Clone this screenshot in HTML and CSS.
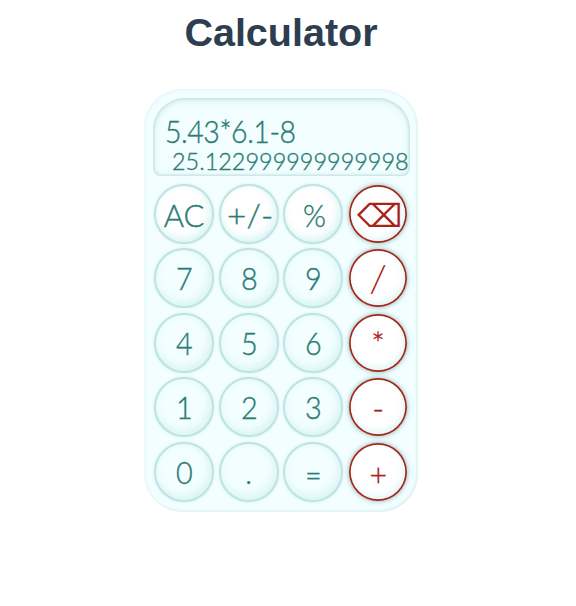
FILE: index.html
```html
<!DOCTYPE html>
<html lang="en">
<head>
<meta charset="utf-8">
<title>Calculator</title>
<link rel="stylesheet" href="styles.css">
</head>
<body>
<h1>Calculator</h1>
<main class="calculator">
  <section class="display">
    <div class="expression">5.43*6.1-8</div>
    <div class="result">25.122999999999998</div>
  </section>
  <section class="keys">
    <button class="key fn"><span class="ac">AC</span></button><button class="key fn"><span class="sign">+/-</span></button><button class="key fn"><span class="percent">%</span></button><button class="key op"><span class="erase">⌫</span></button>
    <button class="key"><span>7</span></button><button class="key"><span>8</span></button><button class="key"><span>9</span></button><button class="key op"><span class="slash">/</span></button>
    <button class="key"><span>4</span></button><button class="key"><span>5</span></button><button class="key"><span>6</span></button><button class="key op"><span class="times">*</span></button>
    <button class="key"><span>1</span></button><button class="key"><span>2</span></button><button class="key"><span>3</span></button><button class="key op"><span class="minus">-</span></button>
    <button class="key"><span>0</span></button><button class="key"><span>.</span></button><button class="key"><span class="equals">=</span></button><button class="key op"><span class="plus">+</span></button>
  </section>
</main>
</body>
</html>
```
FILE: styles.css
```css
* { box-sizing: border-box; }
body {
  margin: 0;
  width: 562px;
  background: #fff;
  font-family: Lato, "Noto Sans", sans-serif;
  font-weight: 300;
}
h1 {
  margin: 9px 0 33px;
  font: bold 39.5px/47px "Liberation Sans", sans-serif;
  text-align: center;
  color: #2c3e50;
}
.calculator {
  width: 274px;
  height: 423px;
  margin: 0 auto;
  padding: 9px 8px 0 9px;
  border-radius: 38px;
  background: #f2feff;
  box-shadow: inset 1px 1px 3px #e6f6f6, inset -1px -1px 3px #d6ecec;
}
.display {
  width: 257px;
  height: 78px;
  padding: 14px 0 0 12px;
  border-radius: 32px 32px 8px 8px;
  background: #f2feff;
  box-shadow: inset 0 0 3px 1px #c0dfde, inset 0 2px 8px #d3eeed;
  color: #2c7c75;
  white-space: nowrap;
  -webkit-text-stroke: 0.4px;
}
.expression {
  width: max-content;
  font-size: 32px;
  line-height: 38px;
  letter-spacing: -0.5px;
  transform: scaleX(.89);
  transform-origin: left;
}
.result {
  width: max-content;
  margin: -4px 0 0 7px;
  font-size: 24px;
  line-height: 29px;
  transform: scaleX(.977);
  transform-origin: left;
}
.keys {
  display: grid;
  grid-template-columns: repeat(4, 60px);
  grid-auto-rows: 60px;
  gap: 4.4px 4.6px;
  margin: 8px 0 0 1.3px;
}
.key {
  width: 60px;
  height: 60px;
  padding: 0;
  border: 2px solid #bfe3e3;
  border-radius: 50%;
  background: #f2feff;
  box-shadow: inset -2px -3px 8px #d6f3f3, 0 0 3px #d3ecec;
  color: #2c7c75;
  font: 300 32px/38px Lato, "Noto Sans", sans-serif;
  -webkit-text-stroke: 0.4px;
}
.key span { display: inline-block; transform: scaleX(.9); }
.fn { background: #fff; }
.key .ac { transform: translateY(1px) scaleX(.97); }
.key .sign { transform: translate(1px, 1px) scaleX(1.04); }
.key .percent { transform: translate(1px, 1px) scaleX(.92); }
.op {
  width: 58px;
  height: 58px;
  place-self: center;
  border: 0;
  background: #fff;
  color: #a92319;
  box-shadow: inset 0 0 0 1.7px #a92319, inset -2px -3px 8px #d8f1f1, 0 0 5px #7db5b3;
}
.key .erase { font-family: "DejaVu Sans", sans-serif; transform: translate(1px, 1px); -webkit-text-stroke: 0; }
.key .slash { transform: scale(1.3, 1.15); -webkit-text-stroke: 0; }
.key .times { transform: none; }
.key .minus { transform: translateY(1px); }
.key .plus { transform: translateY(2px) scaleX(.95); }
.key .equals { transform: translateY(3px) scaleX(.9); }
```
